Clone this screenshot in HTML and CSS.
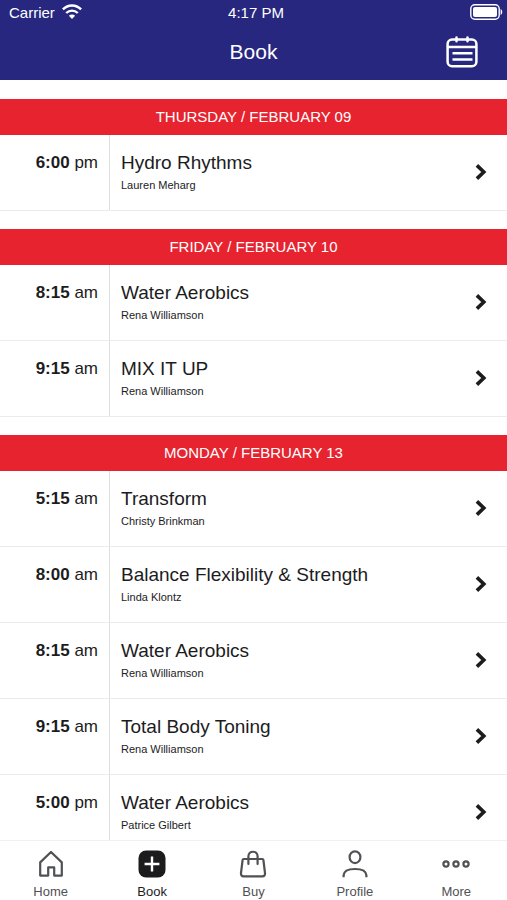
FILE: index.html
```
<!DOCTYPE html>
<html lang="en">
<head>
  <meta charset="UTF-8">
  <meta name="viewport" content="width=device-width, initial-scale=1.0">
  <title>Book</title>
  <link rel="stylesheet" href="styles.css">
</head>
<body>
  <!-- Shared icons -->
  <svg class="sprite" aria-hidden="true">
    <symbol id="chevron" viewBox="0 0 12 18">
      <path d="M1.9 2.4 L8.8 9 L1.9 15.6" fill="none" stroke="currentColor" stroke-width="3.6"/>
    </symbol>
  </svg>

  <header class="header">
    <div class="status">
      <div class="carrier">
        <span>Carrier</span>
        <svg width="20" height="16" viewBox="0 0 20 16" fill="none" stroke="#fff" stroke-width="2.4" aria-hidden="true">
          <path d="M0.9 5.4 C6 0.2 14 0.2 19.1 5.4"/>
          <path d="M4.2 9 C7.6 5.8 12.4 5.8 15.8 9"/>
          <path d="M10 15 L6.9 11.8 C8.6 10.2 11.4 10.2 13.1 11.8 Z" fill="#fff" stroke="none"/>
        </svg>
      </div>
      <span>4:17 PM</span>
      <svg class="battery" width="33" height="16" viewBox="0 0 33 16" aria-hidden="true">
        <rect x="0.8" y="0.8" width="28.4" height="14.4" rx="4" fill="none" stroke="#fff" stroke-width="1.4"/>
        <rect x="3" y="3" width="24" height="10" rx="2" fill="#fff"/>
        <path d="M30.6 5 C32.8 6 32.8 10 30.6 11 Z" fill="#fff"/>
      </svg>
    </div>
    <div class="title-bar">
      <h1>Book</h1>
      <button type="button" class="calendar" aria-label="Calendar">
        <svg width="32" height="32" viewBox="0 0 32 32" fill="none" stroke="#fff" stroke-width="2.5" stroke-linecap="round">
          <rect x="1.6" y="3.6" width="28.8" height="26.6" rx="4.5"/>
          <path d="M2 11 H30 M10.5 1.6 V5.2 M21.5 1.6 V5.2"/>
          <path d="M6.5 17.2 H26.5 M6.5 23.4 H26.5" stroke-linecap="butt"/>
        </svg>
      </button>
    </div>
  </header>

  <main class="schedule">
    <section>
      <h2>THURSDAY / FEBRUARY 09</h2>
      <a class="row" href="#">
        <span class="time"><b>6:00</b> pm</span>
        <span class="info"><span class="name">Hydro Rhythms</span><span class="teacher">Lauren Meharg</span></span>
        <svg class="chevron"><use href="#chevron"/></svg>
      </a>
    </section>

    <section>
      <h2>FRIDAY / FEBRUARY 10</h2>
      <a class="row" href="#">
        <span class="time"><b>8:15</b> am</span>
        <span class="info"><span class="name">Water Aerobics</span><span class="teacher">Rena Williamson</span></span>
        <svg class="chevron"><use href="#chevron"/></svg>
      </a>
      <a class="row" href="#">
        <span class="time"><b>9:15</b> am</span>
        <span class="info"><span class="name">MIX IT UP</span><span class="teacher">Rena Williamson</span></span>
        <svg class="chevron"><use href="#chevron"/></svg>
      </a>
    </section>

    <section>
      <h2>MONDAY / FEBRUARY 13</h2>
      <a class="row" href="#">
        <span class="time"><b>5:15</b> am</span>
        <span class="info"><span class="name">Transform</span><span class="teacher">Christy Brinkman</span></span>
        <svg class="chevron"><use href="#chevron"/></svg>
      </a>
      <a class="row" href="#">
        <span class="time"><b>8:00</b> am</span>
        <span class="info"><span class="name">Balance Flexibility &amp; Strength</span><span class="teacher">Linda Klontz</span></span>
        <svg class="chevron"><use href="#chevron"/></svg>
      </a>
      <a class="row" href="#">
        <span class="time"><b>8:15</b> am</span>
        <span class="info"><span class="name">Water Aerobics</span><span class="teacher">Rena Williamson</span></span>
        <svg class="chevron"><use href="#chevron"/></svg>
      </a>
      <a class="row" href="#">
        <span class="time"><b>9:15</b> am</span>
        <span class="info"><span class="name">Total Body Toning</span><span class="teacher">Rena Williamson</span></span>
        <svg class="chevron"><use href="#chevron"/></svg>
      </a>
      <a class="row" href="#">
        <span class="time"><b>5:00</b> pm</span>
        <span class="info"><span class="name">Water Aerobics</span><span class="teacher">Patrice Gilbert</span></span>
        <svg class="chevron"><use href="#chevron"/></svg>
      </a>
    </section>
  </main>

  <nav class="tabs">
    <a href="#">
      <svg width="28" height="28" viewBox="0 0 28 28" fill="none" stroke="currentColor" stroke-width="2.2" stroke-linejoin="round">
        <path d="M3.2 12.4 L14 2 L24.8 12.4 V25.6 H17.2 V17.4 H11.2 V25.6 H3.2 Z"/>
      </svg>
      Home
    </a>
    <a href="#" class="active">
      <svg width="28" height="28" viewBox="0 0 28 28" fill="none">
        <rect x="0.5" y="0.5" width="27" height="27" rx="7.5" fill="currentColor"/>
        <path d="M14 6.6 V21.4 M6.6 14 H21.4" stroke="#fff" stroke-width="2.4"/>
      </svg>
      Book
    </a>
    <a href="#">
      <svg width="28" height="28" viewBox="0 0 28 28" fill="none" stroke="currentColor" stroke-width="2.2" stroke-linecap="round" stroke-linejoin="round">
        <path d="M4.6 9 H23.4 Q24.2 9 24.4 10 L26 23 C26.2 25.2 25.2 26.4 23.4 26.4 H4.6 C2.8 26.4 1.8 25.2 2 23 L3.6 10 Q3.8 9 4.6 9 Z"/>
        <path d="M9.4 14 V6.4 C9.4 0.2 18.6 0.2 18.6 6.4 V14"/>
      </svg>
      Buy
    </a>
    <a href="#">
      <svg width="28" height="28" viewBox="0 0 28 28" fill="none" stroke="currentColor" stroke-width="2.2">
        <ellipse cx="14" cy="7.2" rx="5.4" ry="5.9"/>
        <path d="M2.6 27.2 V25.4 C2.8 21.2 7 19 14 19 C21 19 25.2 21.2 25.4 25.4 V27.2"/>
      </svg>
      Profile
    </a>
    <a href="#">
      <svg width="28" height="28" viewBox="0 0 28 28" fill="none" stroke="currentColor" stroke-width="2.2">
        <circle cx="4" cy="14" r="2.6"/>
        <circle cx="14" cy="14" r="2.6"/>
        <circle cx="24" cy="14" r="2.6"/>
      </svg>
      More
    </a>
  </nav>
</body>
</html>
```
FILE: styles.css
```
* {
  box-sizing: border-box;
}
body {
  margin: 0;
  height: 100vh;
  display: flex;
  flex-direction: column;
  background: #fff;
  color: #1c1c1e;
  font-family: "Liberation Sans", Arial, sans-serif;
}
a {
  color: inherit;
  text-decoration: none;
}
.sprite {
  display: none;
}

/* Header */
.header {
  flex: none;
  background: #27277f;
  color: #fff;
}
.status {
  display: grid;
  grid-template-columns: 1fr auto 1fr;
  align-items: center;
  height: 24px;
  padding: 0 4px 0 9px;
  font-size: 15px;
}
.carrier {
  display: flex;
  align-items: center;
  gap: 7px;
}
.battery {
  justify-self: end;
}
.title-bar {
  display: grid;
  grid-template-columns: 1fr auto 1fr;
  align-items: center;
  height: 56px;
  padding: 0 29px;
}
h1 {
  grid-column: 2;
  margin: 0;
  font-size: 21px;
  font-weight: normal;
}
.calendar {
  justify-self: end;
  display: flex;
  padding: 0;
  border: none;
  background: none;
}

/* Class list */
.schedule {
  flex: 1;
  min-height: 0;
  display: flex;
  flex-direction: column;
  gap: 18px;
  padding-top: 19px;
  overflow-y: auto;
  scrollbar-width: none;
}
h2 {
  margin: 0;
  background: #e7232f;
  color: #fff;
  font-size: 15px;
  font-weight: normal;
  line-height: 36px;
  text-align: center;
}
.row {
  display: flex;
  height: 76px;
  border-bottom: 1px solid #ebeced;
}
.time {
  width: 110px;
  padding: 17px 11px 0 0;
  border-right: 1px solid #dcdee0;
  font-size: 17px;
  line-height: 22px;
  text-align: right;
}
.info {
  flex: 1;
  padding: 17px 0 0 11px;
}
.name {
  display: block;
  font-size: 19px;
  line-height: 22px;
}
.teacher {
  display: block;
  font-size: 11px;
  line-height: 22px;
}
.chevron {
  width: 12px;
  height: 18px;
  margin: 0 20px 2px 0;
  align-self: center;
}

/* Bottom tabs */
.tabs {
  flex: none;
  display: grid;
  grid-template-columns: repeat(5, 1fr);
  height: 60px;
  border-top: 1px solid #f0f0f1;
  background: #fff;
  color: #505154;
  font-size: 13px;
}
.tabs a {
  display: flex;
  flex-direction: column;
  align-items: center;
  gap: 6px;
  padding-top: 9px;
}
.tabs .active {
  color: #1c1c1e;
}
```
